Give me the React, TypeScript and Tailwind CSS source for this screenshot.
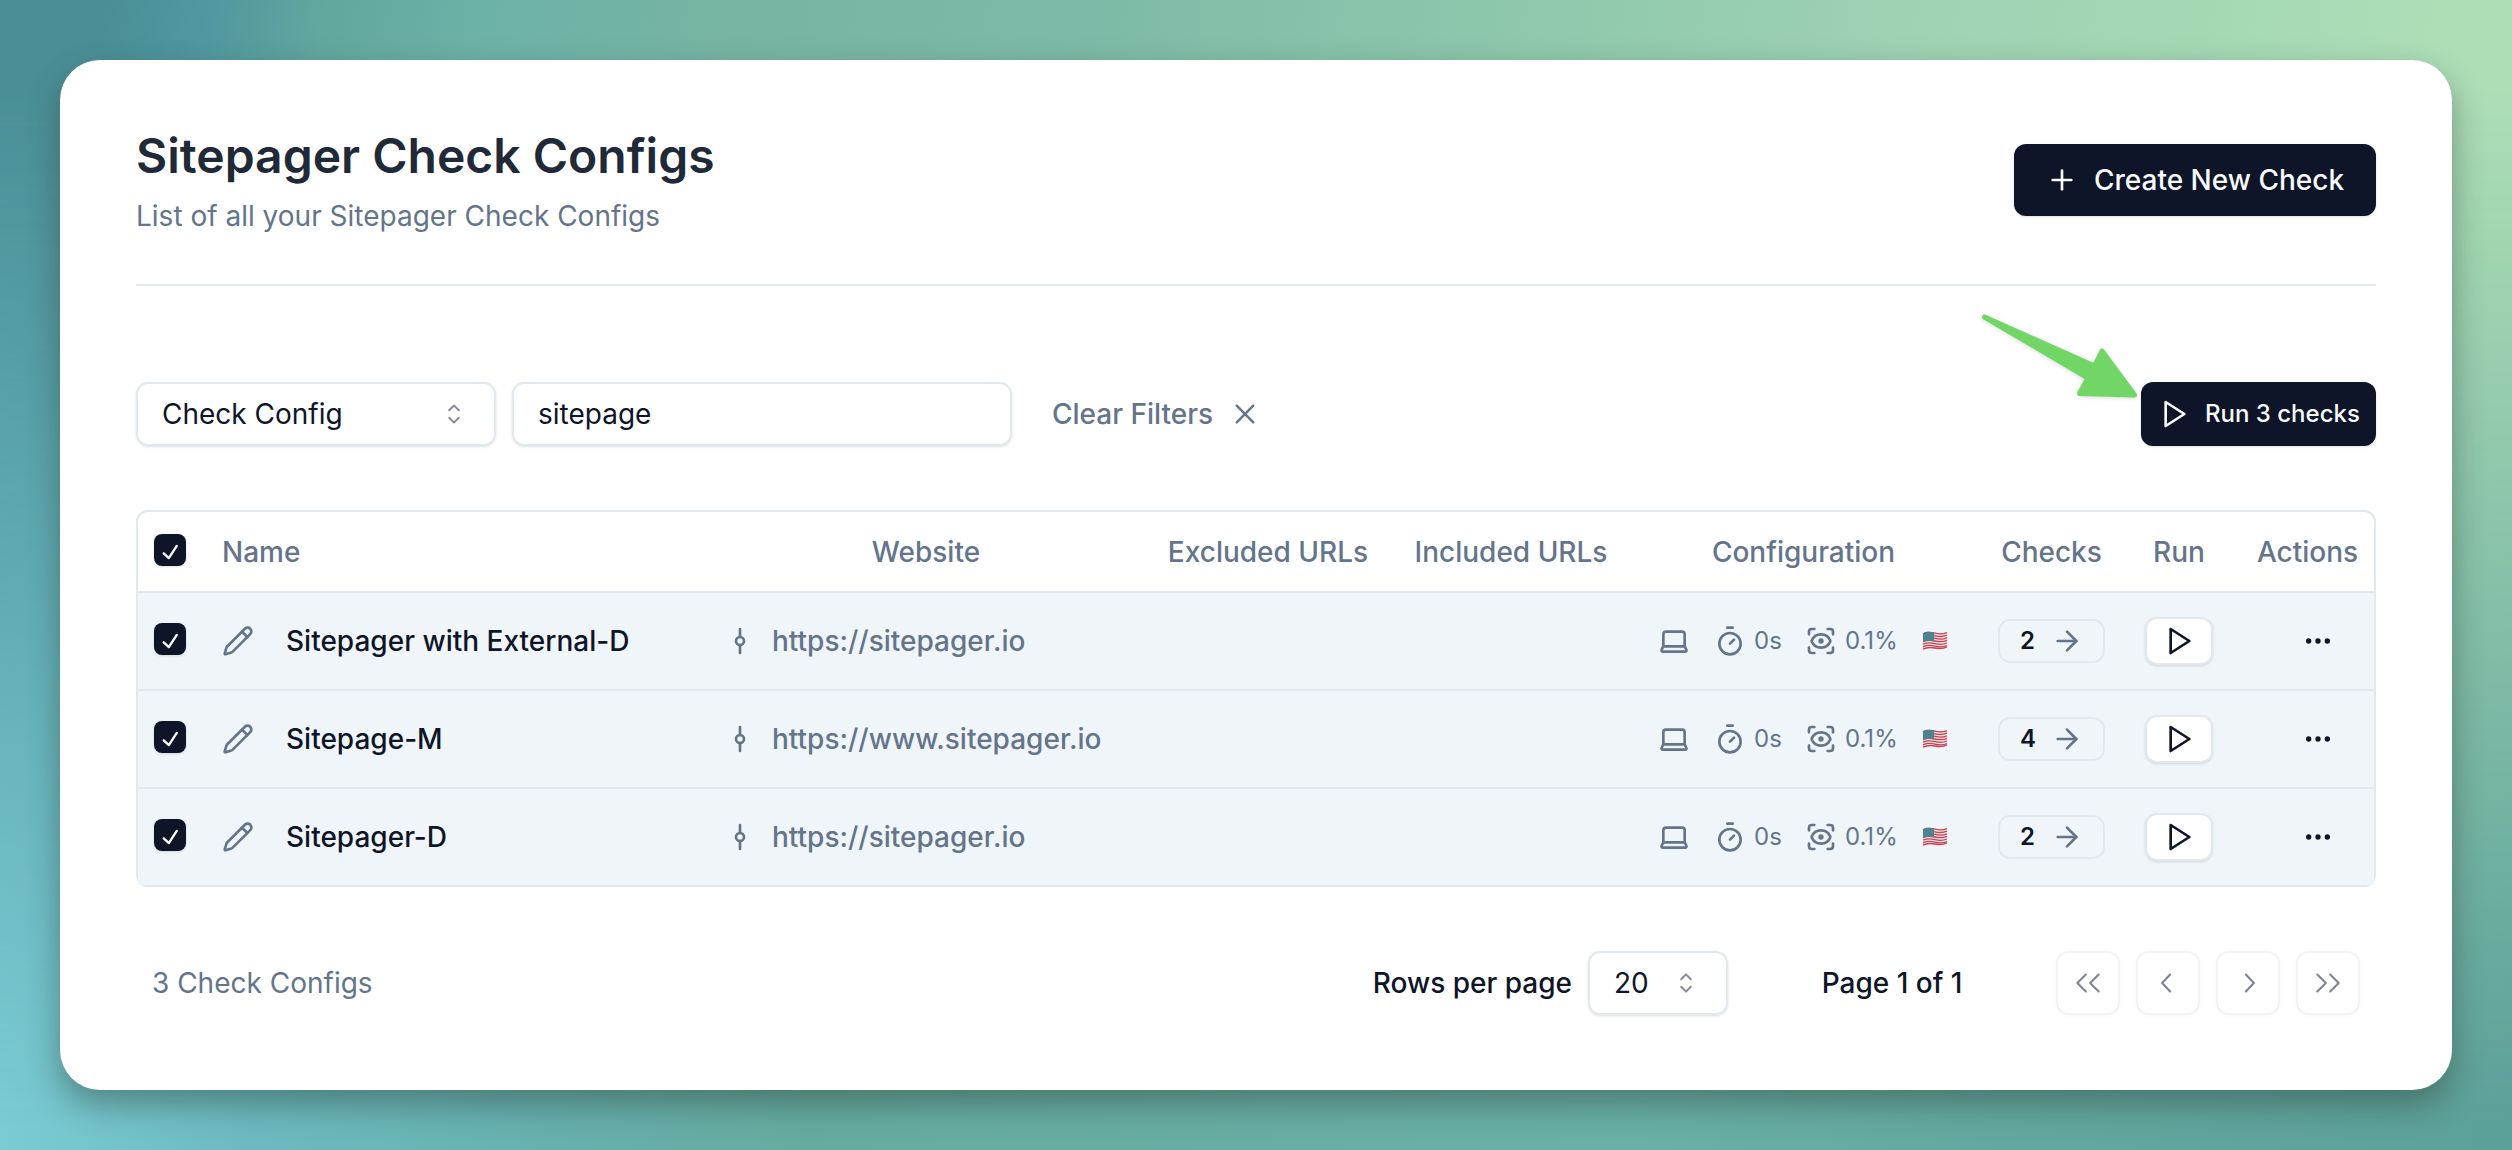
import React from "react";
import { RxCheck, RxCaretSort, RxDoubleArrowLeft, RxDoubleArrowRight, RxChevronLeft, RxChevronRight, RxCross2 } from "react-icons/rx";
import { ArrowRight, Ellipsis, GitCommitVertical, Pencil, Plus, ScanEye, Timer } from "lucide-react";

type Config = { name: string; url: string; checks: number };

const configs: Config[] = [
  { name: "Sitepager with External-D", url: "https://sitepager.io", checks: 2 },
  { name: "Sitepage-M", url: "https://www.sitepager.io", checks: 4 },
  { name: "Sitepager-D", url: "https://sitepager.io", checks: 2 },
];

const columns = "grid grid-cols-[68px_514px_412px_270px_218px_364px_135px_120px_135px]";

function Play({ className }: { className?: string }) {
  return (
    <svg viewBox="0 0 24 24" fill="none" stroke="currentColor" strokeWidth="2" strokeLinecap="round" strokeLinejoin="round" className={"size-8 shrink-0 " + (className ?? "")}>
      <polygon points="5 3 19 12 5 21 5 3" />
    </svg>
  );
}

function Laptop() {
  return (
    <svg viewBox="0 0 24 24" fill="none" stroke="currentColor" strokeWidth="2" strokeLinecap="round" strokeLinejoin="round" className="size-8 shrink-0">
      <path d="M20 16V7a2 2 0 0 0-2-2H6a2 2 0 0 0-2 2v9m16 0H4m16 0 1.28 2.55a1 1 0 0 1-.9 1.45H3.62a1 1 0 0 1-.9-1.45L4 16" />
    </svg>
  );
}

function Flag() {
  return (
    <svg viewBox="0 0 26 20" className="h-5 w-[26px] shrink-0">
      <path d="M1 2.2C5 .2 9 .6 13 1.600S21 2.600 25 1v15.400c-4 1.800-8 1.400-12 .6S5 16.400 1 19z" fill="#ece4e8" />
      <g fill="none" stroke="#c8434f" strokeWidth="1.300">
        <path d="M1 2.800C5 .9 9 1.200 13 2.200S21 3.200 25 1.600" />
        <path d="M1 5.400C5 3.500 9 3.800 13 4.800S21 5.800 25 4.200" />
        <path d="M1 8C5 6.100 9 6.400 13 7.400S21 8.400 25 6.800" />
        <path d="M1 10.600C5 8.700 9 9 13 10S21 11 25 9.400" />
        <path d="M1 13.200C5 11.300 9 11.600 13 12.600S21 13.600 25 12" />
        <path d="M1 15.800C5 13.900 9 14.200 13 15.200S21 16.200 25 14.600" />
        <path d="M1 18.200C5 16.100 9 16.200 13 17S21 17.800 25 16" />
      </g>
      <path d="M1 2.200C5 .2 8 .5 12 1.300v9C8 9.500 5 9.300 1 11z" fill="#4b8390" />
    </svg>
  );
}

function Checkbox() {
  return (
    <span className="mb-1 flex size-8 items-center justify-center rounded-lg bg-[#0f1528] pt-1 text-[#f8fafc] shadow">
      <RxCheck className="size-7" />
    </span>
  );
}

function PageButton({ children }: { children: React.ReactNode }) {
  return (
    <button className="flex size-16 items-center justify-center rounded-xl border-2 border-[#f0f4f9] text-[#7f8594] shadow-[0_2px_4px_rgba(0,0,0,0.025)]">
      {children}
    </button>
  );
}

export default function App() {
  return (
    <div className="relative isolate h-[1150px] w-[2512px] bg-[linear-gradient(90deg,#7acbd3_0%,#6cbac0_10%,#67b0ae_22%,#66ab9f_32%,#68aea4_50%,#69b0a6_65%,#62a79f_82%,#5ca09a_100%)] p-[60px] font-['Inter',sans-serif] text-[28px] leading-10 text-[#0f1528]">
      <div className="absolute inset-0 -z-10 bg-[linear-gradient(100deg,#4a8f96_0%,#4a8f96_4%,#5198a0_8%,#62a79e_12%,#6db2a7_18%,#77b4a3_27%,#7dbaa7_40%,#8cc6ab_54%,#9dd2b3_70%,#a3d7b5_80%,#addeb6_90%,#addeb6_100%)] mask-[linear-gradient(to_bottom,black_8%,transparent_98%)]" />
      <main className="h-[1030px] rounded-[40px] bg-white px-[76px] shadow-[0_14px_32px_rgba(35,50,40,0.42)]">
        <header className="flex h-[226px] items-start justify-between border-b-2 border-[#e2e8f0]">
          <div className="pt-[64px]">
            <h1 className="text-[48px] leading-[64px] font-semibold text-[#1f2937]">Sitepager Check Configs</h1>
            <p className="mt-2 text-[#64748b]">List of all your Sitepager Check Configs</p>
          </div>
          <button className="mt-[84px] flex h-[72px] w-[362px] items-center rounded-xl bg-[#0f1528] pl-8 font-medium text-[#f8fafc] shadow">
            <Plus className="mr-4 size-8" />
            Create New Check
          </button>
        </header>

        <section className="mt-24 flex h-16 items-center">
          <div className="flex h-16 w-[360px] items-center justify-between rounded-xl border-2 border-[#e2e8f0] pr-6 pl-6 shadow-sm">
            Check Config
            <RxCaretSort className="size-8 opacity-50" />
          </div>
          <div className="ml-4 flex h-16 w-[500px] items-center rounded-xl border-2 border-[#e2e8f0] px-6 shadow-sm">sitepage</div>
          <button className="ml-10 flex items-center gap-4 font-medium text-[#64748b]">
            Clear Filters
            <RxCross2 className="size-8" />
          </button>
          <div className="relative ml-auto">
            <button className="flex h-16 w-[235px] items-center gap-[14px] rounded-xl bg-[#0f1528] pl-[18px] text-2xl font-medium text-[#f8fafc] shadow">
              <Play />
              Run 3 checks
            </button>
            <svg viewBox="0 0 156 92" className="absolute -top-[72px] -left-[160px] h-[92px] w-[156px] overflow-visible drop-shadow-sm">
              <path d="M3.500 7 L113.500 56 L121 41 L153.500 85 L98.500 83.500 L107 68 Z" fill="#72d667" stroke="#72d667" strokeWidth="5" strokeLinejoin="round" />
            </svg>
          </div>
        </section>

        <section className="mt-16 rounded-xl border-2 border-[#e2e8f0]">
          <div className={columns + " h-[81px] items-center border-b-2 border-[#e2e8f0] text-center font-medium text-[#64748b]"}>
            <div className="pl-4"><Checkbox /></div>
            <div className="pl-4 text-left">Name</div>
            <div>Website</div>
            <div className="pl-0.5">Excluded URLs</div>
            <div>Included URLs</div>
            <div className="pl-[3px]">Configuration</div>
            <div>Checks</div>
            <div>Run</div>
            <div className="pl-0.5">Actions</div>
          </div>
          {configs.map((c) => (
            <div key={c.name} className={columns + " h-[98px] items-center border-b-2 border-[#e2e8f0] bg-[#f0f5f9] last:h-24 last:border-b-0"}>
              <div className="pl-4"><Checkbox /></div>
              <div className="flex items-center gap-8 pl-4 font-medium">
                <Pencil className="size-8 text-[#64748b]" />
                {c.name}
              </div>
              <div className="flex items-center gap-4 pl-1 font-medium text-[#64748b]">
                <GitCommitVertical className="size-8" />
                {c.url}
              </div>
              <div />
              <div />
              <div className="flex items-center pl-[38px] text-2xl text-[#64748b]">
                <Laptop />
                <Timer className="ml-6 size-8" />
                <span className="ml-2 w-[27px]">0s</span>
                <ScanEye className="ml-6 size-8" />
                <span className="ml-2 w-[53px]">0.1%</span>
                <span className="ml-6"><Flag /></span>
              </div>
              <div className="flex justify-center">
                <span className="flex h-11 w-[107px] items-center rounded-xl border-2 border-[#e2e8f0] pl-5 text-2xl font-semibold">
                  <span className="w-[31px]">{c.checks}</span>
                  <ArrowRight className="size-8 text-[#64748b]" />
                </span>
              </div>
              <div className="flex justify-center">
                <button className="flex h-12 w-[68px] items-center justify-center rounded-xl border-2 border-[#e2e8f0] bg-white pl-0.5 shadow-sm">
                  <Play />
                </button>
              </div>
              <div className="flex justify-center pl-[23px]">
                <Ellipsis className="size-8" />
              </div>
            </div>
          ))}
        </section>

        <footer className="mt-16 flex h-16 items-center pr-4 pl-4">
          <span className="text-[#64748b]">3 Check Configs</span>
          <span className="ml-auto font-medium">Rows per page</span>
          <div className="ml-4 flex h-16 w-[140px] items-center justify-between rounded-xl border-2 border-[#e2e8f0] px-6 shadow-sm">
            20
            <RxCaretSort className="size-8 opacity-50" />
          </div>
          <span className="ml-16 w-[200px] text-center font-medium">Page 1 of 1</span>
          <div className="ml-16 flex gap-4">
            <PageButton><RxDoubleArrowLeft className="size-8" /></PageButton>
            <PageButton><RxChevronLeft className="size-8" /></PageButton>
            <PageButton><RxChevronRight className="size-8" /></PageButton>
            <PageButton><RxDoubleArrowRight className="size-8" /></PageButton>
          </div>
        </footer>
      </main>
    </div>
  );
}
